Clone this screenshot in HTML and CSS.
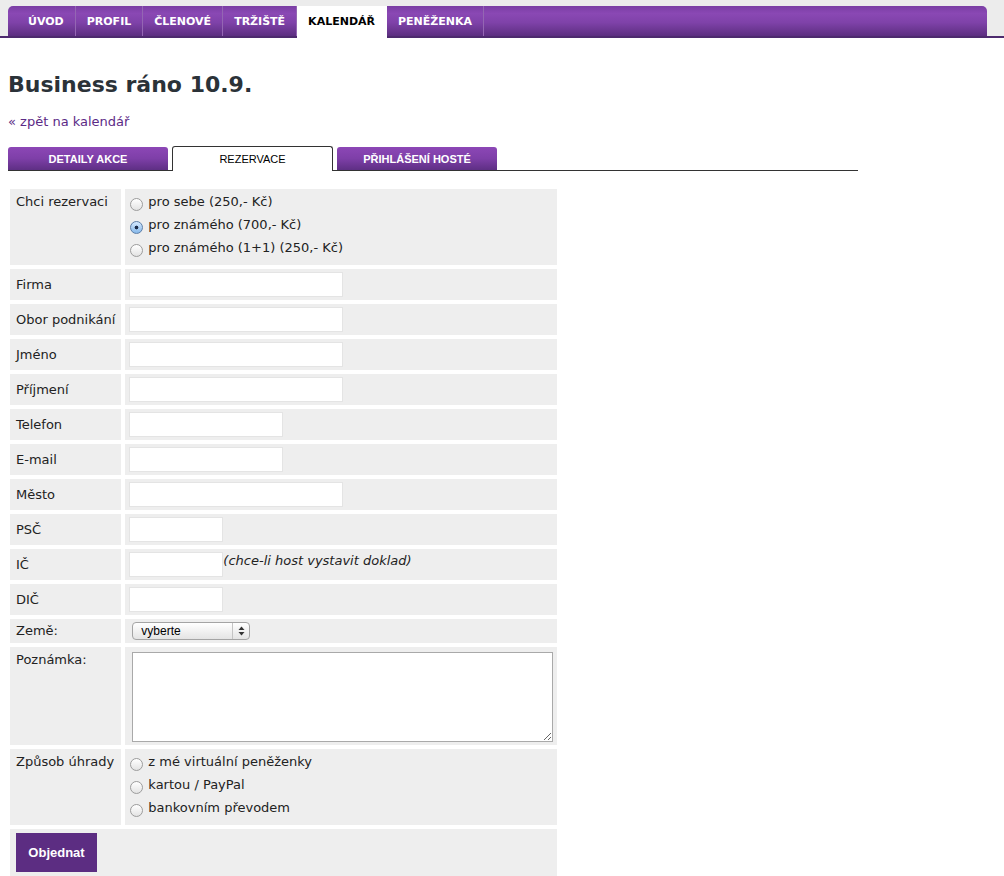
FILE: index.html
```html
<!DOCTYPE html>
<html lang="cs">
<head>
<meta charset="utf-8">
<title>Business ráno 10.9.</title>
<link rel="stylesheet" href="styles.css">
</head>
<body>
<div class="topbar">
  <ul class="nav">
    <li><a href="#">ÚVOD</a></li>
    <li><a href="#">PROFIL</a></li>
    <li><a href="#">ČLENOVÉ</a></li>
    <li><a href="#">TRŽIŠTĚ</a></li>
    <li class="active"><a href="#">KALENDÁŘ</a></li>
    <li><a href="#">PENĚŽENKA</a></li>
  </ul>
</div>
<div class="content">
  <h1 class="title">Business ráno 10.9.</h1>
  <a class="back" href="#">« zpět na kalendář</a>
  <div class="tabs">
    <a class="tab" href="#">DETAILY AKCE</a>
    <a class="tab current" href="#">REZERVACE</a>
    <a class="tab" href="#">PŘIHLÁŠENÍ HOSTÉ</a>
  </div>
  <form class="form">
    <table class="ftable">
      <tr>
        <td class="lbl top">Chci rezervaci</td>
        <td class="val radios">
          <label class="opt"><input type="radio" name="r"> pro sebe (250,- Kč)</label>
          <label class="opt"><input type="radio" name="r" checked> pro známého (700,- Kč)</label>
          <label class="opt"><input type="radio" name="r"> pro známého (1+1) (250,- Kč)</label>
        </td>
      </tr>
      <tr><td class="lbl">Firma</td><td class="val"><input class="inp w-l" type="text"></td></tr>
      <tr><td class="lbl">Obor podnikání</td><td class="val"><input class="inp w-l" type="text"></td></tr>
      <tr><td class="lbl">Jméno</td><td class="val"><input class="inp w-l" type="text"></td></tr>
      <tr><td class="lbl">Příjmení</td><td class="val"><input class="inp w-l" type="text"></td></tr>
      <tr><td class="lbl">Telefon</td><td class="val"><input class="inp w-m" type="text"></td></tr>
      <tr><td class="lbl">E-mail</td><td class="val"><input class="inp w-m" type="text"></td></tr>
      <tr><td class="lbl">Město</td><td class="val"><input class="inp w-l" type="text"></td></tr>
      <tr><td class="lbl">PSČ</td><td class="val"><input class="inp w-s" type="text"></td></tr>
      <tr><td class="lbl">IČ</td><td class="val"><div class="ic"><input class="inp w-s" type="text"><span class="hint">(chce-li host vystavit doklad)</span></div></td></tr>
      <tr><td class="lbl">DIČ</td><td class="val"><input class="inp w-s" type="text"></td></tr>
      <tr>
        <td class="lbl">Země:</td>
        <td class="val sel-cell">
          <span class="selwrap">
            <select class="sel"><option>vyberte</option></select>
            <span class="arrows"><svg width="7" height="10" viewBox="0 0 7 10"><path d="M3.5 0.5 L6.5 4 L0.5 4 Z" fill="#333"/><path d="M0.5 6 L6.5 6 L3.5 9.5 Z" fill="#333"/></svg></span>
          </span>
        </td>
      </tr>
      <tr>
        <td class="lbl top">Poznámka:</td>
        <td class="val note"><textarea class="area"></textarea></td>
      </tr>
      <tr>
        <td class="lbl top">Způsob úhrady</td>
        <td class="val radios">
          <label class="opt"><input type="radio" name="p"> z mé virtuální peněženky</label>
          <label class="opt"><input type="radio" name="p"> kartou / PayPal</label>
          <label class="opt"><input type="radio" name="p"> bankovním převodem</label>
        </td>
      </tr>
      <tr><td class="submit" colspan="2"><button type="button" class="btn">Objednat</button></td></tr>
    </table>
  </form>
</div>
</body>
</html>
```
FILE: styles.css
```css
html, body {
  margin: 0;
  padding: 0;
  background: #ffffff;
}
body {
  font-family: "DejaVu Sans", Verdana, sans-serif;
  font-size: 13px;
  color: #222;
}
.topbar {
  background: #ececec;
  padding: 6px 0 0 8px;
  border-bottom: 2px solid #4d2a6e;
  height: 30px;
}
.nav {
  list-style: none;
  margin: 0;
  padding: 0 0 0 9px;
  width: 970px;
  height: 30px;
  display: flex;
  border-radius: 5px 5px 0 0;
  background: linear-gradient(#7a3ea4 0%, #8a48b4 25%, #7f42a9 55%, #5c2e80 100%);
}
.nav li {
  display: flex;
  border-right: 1px solid #9466b3;
}
.nav li a {
  display: flex;
  align-items: center;
  padding: 0 11px;
  color: #ffffff;
  text-decoration: none;
  font-family: "DejaVu Sans", Verdana, sans-serif;
  font-weight: bold;
  font-size: 11px;
  height: 30px;
}
.nav li.active {
  background: #ffffff;
  height: 32px;
  border-right-color: #ffffff;
}
.nav li.active a {
  color: #000000;
  padding-bottom: 2px;
}
.content {
  padding: 0 8px;
}
.title {
  margin: 34px 0 0;
  font-family: "DejaVu Sans", Verdana, sans-serif;
  font-size: 22px;
  line-height: 26px;
  font-weight: bold;
  color: #2b3238;
}
.back {
  display: block;
  margin-top: 16px;
  line-height: 16px;
  font-size: 13px;
  color: #5b2a86;
  text-decoration: none;
}
.tabs {
  margin-top: 16px;
  width: 850px;
  display: flex;
  gap: 4px;
  border-bottom: 1px solid #333;
  height: 24px;
}
.tab {
  width: 160px;
  height: 23px;
  margin-top: 1px;
  display: flex;
  align-items: center;
  justify-content: center;
  font-family: "Liberation Sans", Arial, sans-serif;
  font-weight: bold;
  font-size: 11px;
  color: #ffffff;
  text-decoration: none;
  border-radius: 3px 3px 0 0;
  background: linear-gradient(#8c47b6 0%, #7e3fa8 50%, #5e2f84 100%);
}
.tab.current {
  background: #ffffff;
  color: #000;
  font-weight: normal;
  border: 1px solid #333;
  border-bottom: none;
  height: 24px;
  margin-top: 0;
  width: 159px;
}
.form {
  margin: 14px 0 0 -2px;
}
.ftable {
  border-spacing: 4px;
  border-collapse: separate;
}
.ftable td {
  background: #eeeeee;
}
.lbl {
  width: 99px;
  padding: 0 6px;
  vertical-align: middle;
  white-space: nowrap;
  line-height: 20px;
}
.lbl.top {
  vertical-align: top;
  padding-top: 3px;
}
.val {
  width: 424px;
  padding: 3px 4px;
  vertical-align: middle;
}
.radios {
  padding: 1px 4px 6px;
  vertical-align: top;
}
.opt {
  display: flex;
  align-items: center;
  height: 23px;
  line-height: 23px;
}
.opt input {
  appearance: none;
  -webkit-appearance: none;
  width: 13px;
  height: 13px;
  margin: 6px 5px 0 1px;
  border: 1px solid #9c9c9c;
  border-radius: 50%;
  background: linear-gradient(#ffffff, #e3e3e3);
  box-sizing: border-box;
  flex: none;
}
.opt input:checked {
  border-color: #5d7fa8;
  background: radial-gradient(circle, #1c2c4a 0 1.6px, transparent 2.2px), linear-gradient(#d6eaff, #86b8ea);
}
.inp {
  display: block;
  box-sizing: border-box;
  height: 25px;
  border: 1px solid #e4e4e4;
  background: #ffffff;
  padding: 0 3px;
  margin: 0;
  font: 13px "DejaVu Sans", sans-serif;
}
.w-l { width: 214px; }
.w-m { width: 154px; }
.w-s { width: 94px; }
.ic {
  display: flex;
  align-items: flex-start;
}
.hint {
  font-style: italic;
  line-height: 17px;
  color: #222;
}
.sel-cell {
  width: 421px;
  padding: 3px 4px 3px 7px;
}
.selwrap {
  position: relative;
  display: inline-block;
  vertical-align: top;
}
.sel {
  appearance: none;
  -webkit-appearance: none;
  display: block;
  width: 118px;
  height: 18px;
  margin: 0;
  padding: 0 0 0 8px;
  border: 1px solid #a4a4a4;
  border-radius: 4px;
  background: linear-gradient(#ffffff, #e4e4e4);
  font-family: "Liberation Sans", Arial, sans-serif;
  font-size: 12px;
  line-height: 16px;
  color: #000;
}
.arrows {
  position: absolute;
  top: 1px;
  right: 1px;
  width: 16px;
  height: 16px;
  border-left: 1px solid #c4c4c4;
  display: flex;
  align-items: center;
  justify-content: center;
}
.note {
  width: 421px;
  padding: 5px 4px 3px 7px;
}
.area {
  display: block;
  box-sizing: border-box;
  width: 421px;
  height: 90px;
  margin: 0;
  border: 1px solid #a9a9a9;
  background: #ffffff;
}
.submit {
  padding: 4px 6px;
}
.btn {
  display: block;
  width: 81px;
  height: 39px;
  border: none;
  background: #5c2d82;
  color: #ffffff;
  font-family: "Liberation Sans", Arial, sans-serif;
  font-weight: bold;
  font-size: 13px;
  padding: 0;
}
```
